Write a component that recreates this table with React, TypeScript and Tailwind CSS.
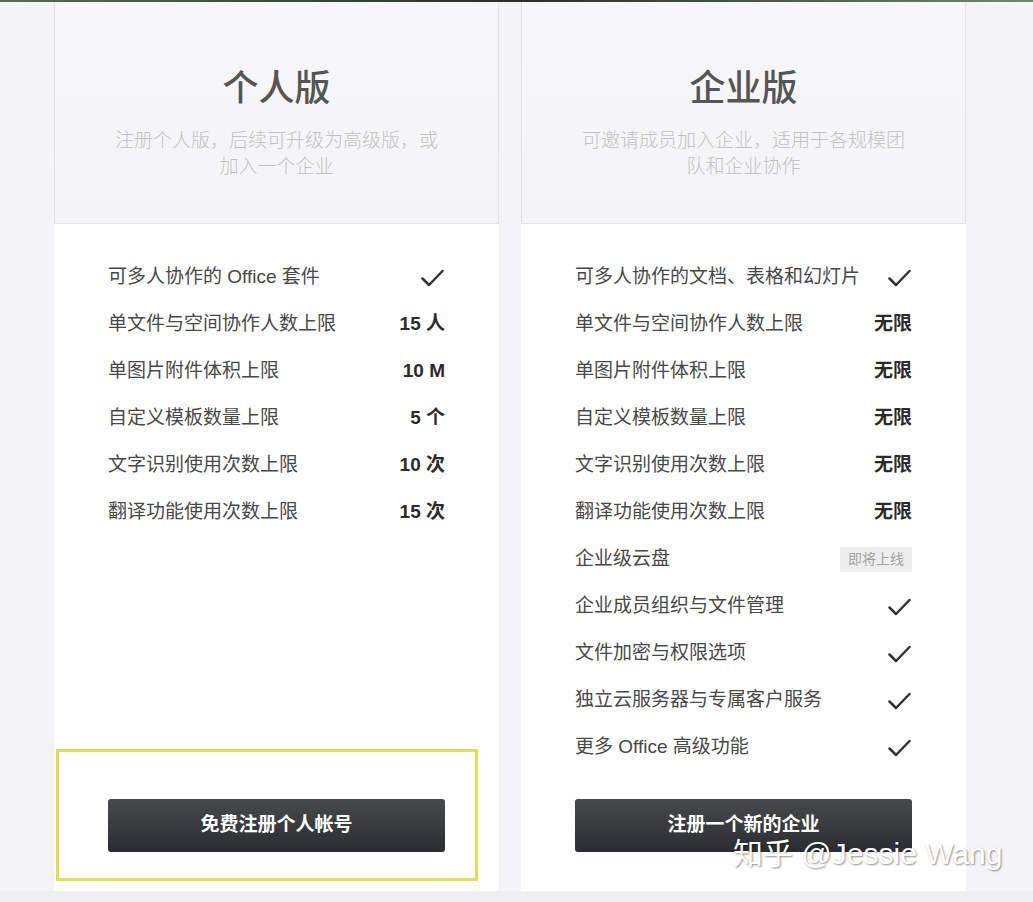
import React from "react";

type Row = {
  label: string;
  value?: string;
  check?: boolean;
  badge?: string;
};

const personalRows: Row[] = [
  { label: "可多人协作的 Office 套件", check: true },
  { label: "单文件与空间协作人数上限", value: "15 人" },
  { label: "单图片附件体积上限", value: "10 M" },
  { label: "自定义模板数量上限", value: "5 个" },
  { label: "文字识别使用次数上限", value: "10 次" },
  { label: "翻译功能使用次数上限", value: "15 次" },
];

const teamRows: Row[] = [
  { label: "可多人协作的文档、表格和幻灯片", check: true },
  { label: "单文件与空间协作人数上限", value: "无限" },
  { label: "单图片附件体积上限", value: "无限" },
  { label: "自定义模板数量上限", value: "无限" },
  { label: "文字识别使用次数上限", value: "无限" },
  { label: "翻译功能使用次数上限", value: "无限" },
  { label: "企业级云盘", badge: "即将上线" },
  { label: "企业成员组织与文件管理", check: true },
  { label: "文件加密与权限选项", check: true },
  { label: "独立云服务器与专属客户服务", check: true },
  { label: "更多 Office 高级功能", check: true },
];

function Check() {
  return (
    <svg width="23" height="18" viewBox="0 0 23 18" fill="none" className="mr-[1px]">
      <path
        d="M1.5 9.5 L8 16 L21.5 2"
        stroke="#333"
        strokeWidth="2.5"
        strokeLinecap="round"
        strokeLinejoin="round"
      />
    </svg>
  );
}

type PlanProps = {
  title: string;
  desc: string;
  rows: Row[];
  button: string;
};

function Plan({ title, desc, rows, button }: PlanProps) {
  return (
    <div className="w-[445px] h-[889px] flex flex-col bg-white">
      <div className="h-[222px] flex flex-col items-center bg-gradient-to-b from-[#f7f7f9] to-[#f4f4f6] border-x border-b border-[#e4e4e6] pt-[65px]">
        <h2 className="text-[36px] leading-[44px] font-medium text-[#555]">
          {title}
        </h2>
        <p className="mt-[17px] max-w-[336px] text-center text-[19px] leading-[26px] font-light text-[#c2c2c2]">
          {desc}
        </p>
      </div>

      <div className="flex-1 flex flex-col px-[54px] pt-[30px] pb-[39px]">
        <ul>
          {rows.map((r) => (
            <li
              key={r.label}
              className="h-[47px] flex items-center justify-between text-[19px] text-[#484848]"
            >
              <span>{r.label}</span>
              {r.value && (
                <span className="font-bold text-[#2b2b2b]">{r.value}</span>
              )}
              {r.check && <Check />}
              {r.badge && (
                <span className="h-[25px] w-[72px] flex items-center justify-center rounded-[2px] bg-[#ededed] text-[14px] text-[#a3a3a3]">
                  {r.badge}
                </span>
              )}
            </li>
          ))}
        </ul>

        <button className="mt-auto h-[53px] w-full rounded-[3px] bg-gradient-to-b from-[#47494c] to-[#2b2d30] text-[19px] font-bold text-white">
          {button}
        </button>
      </div>
    </div>
  );
}

export default function App() {
  return (
    <div
      className="relative w-[1033px] h-[902px] overflow-hidden bg-[#f4f4f6]"
      style={{ fontFamily: '"Liberation Sans", "Noto Sans CJK SC", sans-serif' }}
    >
      <div className="h-[2px] bg-gradient-to-r from-[#5d6a52] via-[#2a2f28] to-[#7a8570]" />

      <div className="flex gap-[22px] pl-[54px]">
        <Plan
          title="个人版"
          desc="注册个人版，后续可升级为高级版，或加入一个企业"
          rows={personalRows}
          button="免费注册个人帐号"
        />
        <Plan
          title="企业版"
          desc="可邀请成员加入企业，适用于各规模团队和企业协作"
          rows={teamRows}
          button="注册一个新的企业"
        />
      </div>

      <div className="h-[11px] bg-[#efeff1]" />

      {/* yellow highlight around the personal signup button */}
      <div className="absolute left-[56px] top-[749px] w-[422px] h-[132px] border-[3px] border-[#e8dc50]" />

      {/* watermark */}
      <div
        className="absolute left-[733px] top-[834px] text-[30px] leading-[40px] text-white"
        style={{ textShadow: "1px 1px 2px rgba(0,0,0,0.45)" }}
      >
        知乎 @Jessie Wang
      </div>
    </div>
  );
}
